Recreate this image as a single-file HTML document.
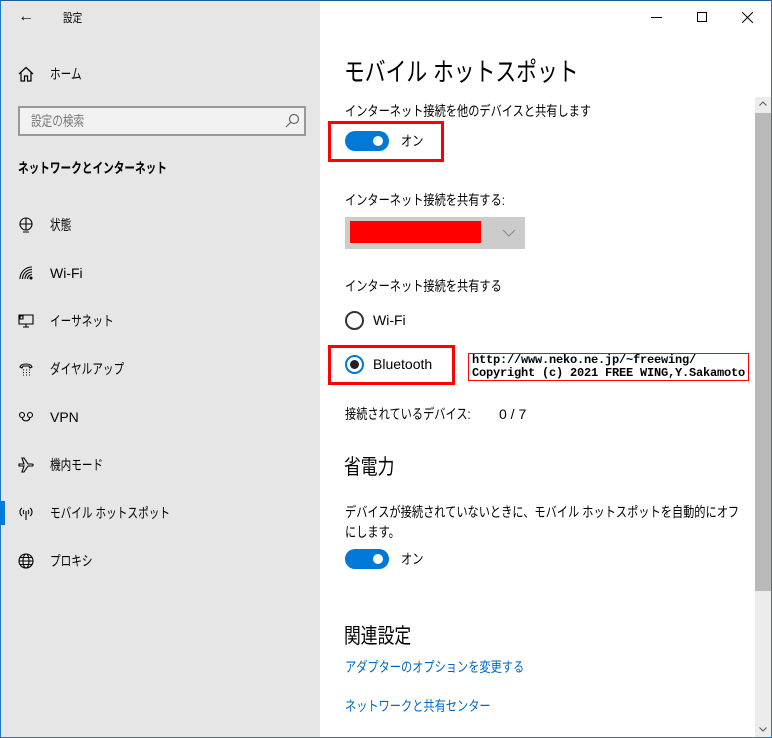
<!DOCTYPE html>
<html><head><meta charset="utf-8"><style>
*{margin:0;padding:0;box-sizing:border-box}
body{width:772px;height:738px;overflow:hidden;position:relative;background:#fff;font-family:"Liberation Sans","Noto Sans CJK JP",sans-serif;color:#000}
.a{position:absolute;white-space:nowrap}
.s{transform:scaleX(.8);transform-origin:0 0}
.s2{transform:scaleX(.76);transform-origin:0 0}
#side{position:absolute;left:0;top:0;width:320px;height:738px;background:#e6e6e6;border-left:1px solid #1979ca}
.t14{font-size:14px;line-height:18px}
.it{position:absolute;left:49px;font-size:14px;line-height:18px;white-space:nowrap}
.ic{position:absolute;left:17px}
.tog{position:absolute;width:44px;height:20px;border-radius:10px;background:#0078d7}
.tog:after{content:"";position:absolute;right:6px;top:5px;width:10px;height:10px;border-radius:50%;background:#fff}
.red{position:absolute;border:3px solid #f00}
.lnk{color:#0067c0}
</style></head><body>
<div id="side">
<div class="a" style="left:17px;top:8px;font-size:16px">&#8592;</div>
<div class="a s" style="left:62px;top:9px;font-size:12px">設定</div>
<svg class="ic" style="top:66px" width="16" height="16" viewBox="0 0 16 16" fill="none" stroke="#000" stroke-width="1.2"><path d="M1 8L8 1.5L15 8M3 6.5V15H6.5V10H9.5V15H13V6.5"/></svg>
<div class="it s2" style="top:65px">ホーム</div>
<div class="a" style="left:17px;top:106px;width:288px;height:30px;border:2px solid #999;background:#f2f2f2"></div>
<div class="a s2" style="left:30px;top:111px;font-size:14px;color:#777">設定の検索</div>
<svg class="a" style="left:283px;top:113px" width="16" height="16" viewBox="0 0 16 16" fill="none" stroke="#666" stroke-width="1.2"><circle cx="10" cy="6" r="4.5"/><path d="M7 9L2 14"/></svg>
<div class="a s2" style="left:17px;top:158px;font-size:14px;font-weight:bold">ネットワークとインターネット</div>
<svg class="ic" style="top:217px" width="16" height="16" viewBox="0 0 16 16" fill="none" stroke="#000" stroke-width="1.1"><circle cx="8" cy="7" r="6"/><path d="M2 7H14M8 1V13M5 15H11"/></svg>
<div class="it s2" style="top:216px">状態</div>
<svg class="ic" style="top:265px" width="16" height="16" viewBox="0 0 16 16" fill="none" stroke="#000" stroke-width="1.1"><path d="M2 14A12 12 0 0 1 14 2M4.5 14A9.5 9.5 0 0 1 14 4.5M7 14A7 7 0 0 1 14 7M9.5 14A4.5 4.5 0 0 1 14 9.5"/><circle cx="13" cy="13" r="1" fill="#000"/></svg>
<div class="it" style="top:264px">Wi-Fi</div>
<svg class="ic" style="top:313px" width="16" height="16" viewBox="0 0 16 16" fill="none" stroke="#000" stroke-width="1.1"><path d="M1 2H15V11H1ZM5 14H11M8 11V14M2 3H5V6H2Z"/></svg>
<div class="it s2" style="top:312px">イーサネット</div>
<svg class="ic" style="top:361px" width="16" height="16" viewBox="0 0 16 16" fill="none" stroke="#000" stroke-width="1.1"><path d="M2 6C3 2 13 2 14 6L12 7L11 5H5L4 7Z"/><path d="M5 9h1M8 9h1M11 9h1M5 11.5h1M8 11.5h1M11 11.5h1M5 14h1M8 14h1M11 14h1"/></svg>
<div class="it s2" style="top:360px">ダイヤルアップ</div>
<svg class="ic" style="top:410px" width="16" height="16" viewBox="0 0 16 16" fill="none" stroke="#000" stroke-width="1.1"><circle cx="4" cy="5" r="2.5"/><circle cx="12" cy="5" r="2.5"/><path d="M4 7.5C5 12 11 12 12 7.5"/></svg>
<div class="it" style="top:408px">VPN</div>
<svg class="ic" style="top:457px" width="16" height="16" viewBox="0 0 16 16" fill="none" stroke="#000" stroke-width="1.1"><path d="M1 7H6L4 1H6L10 7H14C15.5 7 15.5 9 14 9H10L6 15H4L6 9H1L1 7Z"/></svg>
<div class="it s2" style="top:456px">機内モード</div>
<div class="a" style="left:-1px;top:501px;width:5px;height:24px;background:#0078d7"></div>
<svg class="ic" style="top:505px" width="16" height="16" viewBox="0 0 16 16" fill="none" stroke="#000" stroke-width="1.1"><path d="M8 6V15M4 3A5 5 0 0 0 4 11M12 3A5 5 0 0 1 12 11M6 5A3 3 0 0 0 6 9M10 5A3 3 0 0 1 10 9"/></svg>
<div class="it s2" style="top:504px">モバイル ホットスポット</div>
<svg class="ic" style="top:553px" width="16" height="16" viewBox="0 0 16 16" fill="none" stroke="#000" stroke-width="1.1"><circle cx="8" cy="8" r="7"/><ellipse cx="8" cy="8" rx="3" ry="7"/><path d="M1 8H15M2 4.5H14M2 11.5H14"/></svg>
<div class="it s2" style="top:552px">プロキシ</div>
</div>
<div class="a" style="left:0;top:0;width:772px;height:1px;background:#1f5d93"></div>
<div class="a" style="left:0;top:737px;width:772px;height:1px;background:#1979ca"></div>
<div class="a" style="left:771px;top:0;width:1px;height:738px;background:#1979ca"></div>
<div class="a" style="left:651px;top:17px;width:11px;height:1px;background:#000"></div>
<div class="a" style="left:697px;top:12px;width:10px;height:10px;border:1px solid #000"></div>
<svg class="a" style="left:742px;top:12px" width="11" height="11" viewBox="0 0 11 11" stroke="#000" stroke-width="1"><path d="M0 0L11 11M11 0L0 11"/></svg>
<div class="a" style="left:755px;top:97px;width:16px;height:640px;background:#ececec"></div>
<div class="a" style="left:755px;top:113px;width:16px;height:478px;background:#b9b9b9"></div>
<svg class="a" style="left:759px;top:101px" width="8" height="5" viewBox="0 0 8 5" fill="none" stroke="#555"><path d="M0.5 4.5L4 1L7.5 4.5"/></svg>
<svg class="a" style="left:759px;top:727px" width="8" height="5" viewBox="0 0 8 5" fill="none" stroke="#555"><path d="M0.5 0.5L4 4L7.5 0.5"/></svg>

<div class="a s" style="left:344px;top:56px;font-size:26px;line-height:32px">モバイル ホットスポット</div>
<div class="a t14 s" style="left:345px;top:102px">インターネット接続を他のデバイスと共有します</div>
<div class="tog" style="left:345px;top:131px"></div>
<div class="a t14 s" style="left:401px;top:132px">オン</div>
<div class="red" style="left:328px;top:121px;width:116px;height:41px"></div>
<div class="a t14 s" style="left:345px;top:191px">インターネット接続を共有する:</div>
<div class="a" style="left:345px;top:217px;width:180px;height:32px;background:#ccc"></div>
<div class="a" style="left:350px;top:221px;width:131px;height:22px;background:#f00"></div>
<svg class="a" style="left:502px;top:229px" width="14" height="8" viewBox="0 0 14 8" fill="none" stroke="#888" stroke-width="1"><path d="M1 1L7 7L13 1"/></svg>
<div class="a t14 s" style="left:345px;top:277px">インターネット接続を共有する</div>
<div class="a" style="left:345px;top:311px;width:19px;height:19px;border:2px solid #333;border-radius:50%"></div>
<div class="a t14" style="left:373px;top:311px">Wi-Fi</div>
<div class="a" style="left:345px;top:355px;width:19px;height:19px;border:2px solid #0078d7;border-radius:50%"></div>
<div class="a" style="left:350px;top:360px;width:9px;height:9px;background:#222;border-radius:50%"></div>
<div class="a t14" style="left:373px;top:355px">Bluetooth</div>
<div class="red" style="left:328px;top:345px;width:127px;height:40px"></div>
<div class="a" style="left:468px;top:353px;width:281px;height:28px;border:1px solid #f00;background:#fff"></div>
<div class="a" style="left:472px;top:354px;font-family:'Liberation Mono',monospace;font-weight:bold;font-size:12px;line-height:13px;letter-spacing:-0.2px">http://www.neko.ne.jp/~freewing/<br>Copyright (c) 2021 FREE WING,Y.Sakamoto</div>
<div class="a t14 s" style="left:345px;top:405px">接続されているデバイス:</div>
<div class="a t14" style="left:499px;top:405px">0 / 7</div>
<div class="a s" style="left:344px;top:455px;font-size:21px;line-height:26px">省電力</div>
<div class="a t14 s" style="left:345px;top:502px;line-height:20px">デバイスが接続されていないときに、モバイル ホットスポットを自動的にオフ<br>にします。</div>
<div class="tog" style="left:345px;top:549px"></div>
<div class="a t14 s" style="left:401px;top:550px">オン</div>
<div class="a s" style="left:344px;top:624px;font-size:21px;line-height:26px">関連設定</div>
<div class="a t14 lnk s" style="left:345px;top:658px">アダプターのオプションを変更する</div>
<div class="a t14 lnk s" style="left:345px;top:697px">ネットワークと共有センター</div>
</body></html>
